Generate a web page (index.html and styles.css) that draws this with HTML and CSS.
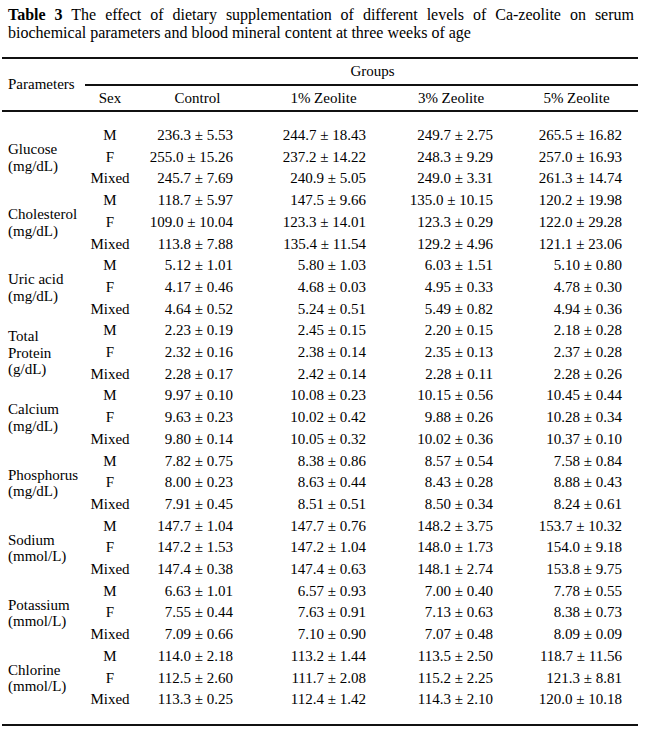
FILE: index.html
```html
<!DOCTYPE html>
<html>
<head>
<meta charset="utf-8">
<link rel="stylesheet" href="styles.css">
</head>
<body>
<div class="page">
  <p class="caption"><b class="tno">Table 3</b> The effect of dietary supplementation of different levels of Ca-zeolite on serum biochemical parameters and blood mineral content at three weeks of age</p>
  <table class="tbl">
    <colgroup>
      <col class="c-param"><col class="c-sex"><col class="c-ctrl"><col class="c-z1"><col class="c-z3"><col class="c-z5">
    </colgroup>
    <thead>
      <tr class="h1">
        <th rowspan="2" class="param-h">Parameters</th>
        <th colspan="5" class="groups">Groups</th>
      </tr>
      <tr class="h2">
        <th>Sex</th><th>Control</th><th>1% Zeolite</th><th>3% Zeolite</th><th>5% Zeolite</th>
      </tr>
    </thead>
    <tbody>
      <tr class="gap"><td colspan="6"></td></tr>
      <tr><td rowspan="3" class="label">Glucose<br>(mg/dL)</td><td class="sex">M</td><td class="n n1">236.3 ± 5.53</td><td class="n n2">244.7 ± 18.43</td><td class="n n3">249.7 ± 2.75</td><td class="n n4">265.5 ± 16.82</td></tr>
      <tr><td class="sex">F</td><td class="n n1">255.0 ± 15.26</td><td class="n n2">237.2 ± 14.22</td><td class="n n3">248.3 ± 9.29</td><td class="n n4">257.0 ± 16.93</td></tr>
      <tr><td class="sex">Mixed</td><td class="n n1">245.7 ± 7.69</td><td class="n n2">240.9 ± 5.05</td><td class="n n3">249.0 ± 3.31</td><td class="n n4">261.3 ± 14.74</td></tr>

      <tr><td rowspan="3" class="label">Cholesterol<br>(mg/dL)</td><td class="sex">M</td><td class="n n1">118.7 ± 5.97</td><td class="n n2">147.5 ± 9.66</td><td class="n n3">135.0 ± 10.15</td><td class="n n4">120.2 ± 19.98</td></tr>
      <tr><td class="sex">F</td><td class="n n1">109.0 ± 10.04</td><td class="n n2">123.3 ± 14.01</td><td class="n n3">123.3 ± 0.29</td><td class="n n4">122.0 ± 29.28</td></tr>
      <tr><td class="sex">Mixed</td><td class="n n1">113.8 ± 7.88</td><td class="n n2">135.4 ± 11.54</td><td class="n n3">129.2 ± 4.96</td><td class="n n4">121.1 ± 23.06</td></tr>

      <tr><td rowspan="3" class="label">Uric acid<br>(mg/dL)</td><td class="sex">M</td><td class="n n1">5.12 ± 1.01</td><td class="n n2">5.80 ± 1.03</td><td class="n n3">6.03 ± 1.51</td><td class="n n4">5.10 ± 0.80</td></tr>
      <tr><td class="sex">F</td><td class="n n1">4.17 ± 0.46</td><td class="n n2">4.68 ± 0.03</td><td class="n n3">4.95 ± 0.33</td><td class="n n4">4.78 ± 0.30</td></tr>
      <tr><td class="sex">Mixed</td><td class="n n1">4.64 ± 0.52</td><td class="n n2">5.24 ± 0.51</td><td class="n n3">5.49 ± 0.82</td><td class="n n4">4.94 ± 0.36</td></tr>

      <tr><td rowspan="3" class="label">Total<br>Protein<br>(g/dL)</td><td class="sex">M</td><td class="n n1">2.23 ± 0.19</td><td class="n n2">2.45 ± 0.15</td><td class="n n3">2.20 ± 0.15</td><td class="n n4">2.18 ± 0.28</td></tr>
      <tr><td class="sex">F</td><td class="n n1">2.32 ± 0.16</td><td class="n n2">2.38 ± 0.14</td><td class="n n3">2.35 ± 0.13</td><td class="n n4">2.37 ± 0.28</td></tr>
      <tr><td class="sex">Mixed</td><td class="n n1">2.28 ± 0.17</td><td class="n n2">2.42 ± 0.14</td><td class="n n3">2.28 ± 0.11</td><td class="n n4">2.28 ± 0.26</td></tr>

      <tr><td rowspan="3" class="label">Calcium<br>(mg/dL)</td><td class="sex">M</td><td class="n n1">9.97 ± 0.10</td><td class="n n2">10.08 ± 0.23</td><td class="n n3">10.15 ± 0.56</td><td class="n n4">10.45 ± 0.44</td></tr>
      <tr><td class="sex">F</td><td class="n n1">9.63 ± 0.23</td><td class="n n2">10.02 ± 0.42</td><td class="n n3">9.88 ± 0.26</td><td class="n n4">10.28 ± 0.34</td></tr>
      <tr><td class="sex">Mixed</td><td class="n n1">9.80 ± 0.14</td><td class="n n2">10.05 ± 0.32</td><td class="n n3">10.02 ± 0.36</td><td class="n n4">10.37 ± 0.10</td></tr>

      <tr><td rowspan="3" class="label">Phosphorus<br>(mg/dL)</td><td class="sex">M</td><td class="n n1">7.82 ± 0.75</td><td class="n n2">8.38 ± 0.86</td><td class="n n3">8.57 ± 0.54</td><td class="n n4">7.58 ± 0.84</td></tr>
      <tr><td class="sex">F</td><td class="n n1">8.00 ± 0.23</td><td class="n n2">8.63 ± 0.44</td><td class="n n3">8.43 ± 0.28</td><td class="n n4">8.88 ± 0.43</td></tr>
      <tr><td class="sex">Mixed</td><td class="n n1">7.91 ± 0.45</td><td class="n n2">8.51 ± 0.51</td><td class="n n3">8.50 ± 0.34</td><td class="n n4">8.24 ± 0.61</td></tr>

      <tr><td rowspan="3" class="label">Sodium<br>(mmol/L)</td><td class="sex">M</td><td class="n n1">147.7 ± 1.04</td><td class="n n2">147.7 ± 0.76</td><td class="n n3">148.2 ± 3.75</td><td class="n n4">153.7 ± 10.32</td></tr>
      <tr><td class="sex">F</td><td class="n n1">147.2 ± 1.53</td><td class="n n2">147.2 ± 1.04</td><td class="n n3">148.0 ± 1.73</td><td class="n n4">154.0 ± 9.18</td></tr>
      <tr><td class="sex">Mixed</td><td class="n n1">147.4 ± 0.38</td><td class="n n2">147.4 ± 0.63</td><td class="n n3">148.1 ± 2.74</td><td class="n n4">153.8 ± 9.75</td></tr>

      <tr><td rowspan="3" class="label">Potassium<br>(mmol/L)</td><td class="sex">M</td><td class="n n1">6.63 ± 1.01</td><td class="n n2">6.57 ± 0.93</td><td class="n n3">7.00 ± 0.40</td><td class="n n4">7.78 ± 0.55</td></tr>
      <tr><td class="sex">F</td><td class="n n1">7.55 ± 0.44</td><td class="n n2">7.63 ± 0.91</td><td class="n n3">7.13 ± 0.63</td><td class="n n4">8.38 ± 0.73</td></tr>
      <tr><td class="sex">Mixed</td><td class="n n1">7.09 ± 0.66</td><td class="n n2">7.10 ± 0.90</td><td class="n n3">7.07 ± 0.48</td><td class="n n4">8.09 ± 0.09</td></tr>

      <tr><td rowspan="3" class="label">Chlorine<br>(mmol/L)</td><td class="sex">M</td><td class="n n1">114.0 ± 2.18</td><td class="n n2">113.2 ± 1.44</td><td class="n n3">113.5 ± 2.50</td><td class="n n4">118.7 ± 11.56</td></tr>
      <tr><td class="sex">F</td><td class="n n1">112.5 ± 2.60</td><td class="n n2">111.7 ± 2.08</td><td class="n n3">115.2 ± 2.25</td><td class="n n4">121.3 ± 8.81</td></tr>
      <tr><td class="sex">Mixed</td><td class="n n1">113.3 ± 0.25</td><td class="n n2">112.4 ± 1.42</td><td class="n n3">114.3 ± 2.10</td><td class="n n4">120.0 ± 10.18</td></tr>
      <tr class="gap"><td colspan="6"></td></tr>
    </tbody>
  </table>
</div>
</body>
</html>
```

FILE: styles.css
```css
html, body {
  margin: 0;
  padding: 0;
  background: #ffffff;
}

body {
  font-family: "Liberation Serif", "Times New Roman", Tinos, "Nimbus Roman", "DejaVu Serif", serif;
  color: #000;
}

.page {
  width: 647px;
  padding: 6px 0 0 2px;
  box-sizing: border-box;
}

.caption {
  margin: 0 13px 15px 6px;
  font-size: 16px;
  line-height: 18px;
  text-align: justify;
}

.caption .tno {
  font-weight: bold;
}

.tbl {
  border-collapse: collapse;
  table-layout: fixed;
  width: 636px;
  font-size: 15px;
}

.c-param { width: 83px; }
.c-sex { width: 50px; }
.c-ctrl { width: 125px; }
.c-z1 { width: 127px; }
.c-z3 { width: 128px; }
.c-z5 { width: 123px; }

.tbl th {
  font-weight: normal;
  padding: 0;
  text-align: center;
  vertical-align: middle;
}

.tbl .h1 th {
  border-top: 2px solid #111;
  height: 25px;
}

.tbl .h1 .groups {
  border-bottom: 2px solid #111;
  padding-left: 22px;
}

.tbl .h2 th {
  height: 24px;
  border-bottom: 2px solid #111;
}

.tbl .param-h {
  text-align: left;
  padding-left: 6px;
  border-bottom: 2px solid #111;
}

.tbl td {
  padding: 0;
  line-height: 21.7px;
  white-space: nowrap;
}

.tbl .gap td {
  height: 13px;
  line-height: 13px;
}

.tbl tbody tr:last-child td {
  border-bottom: 2px solid #111;
}

.tbl .label {
  line-height: 16.5px;
  padding-left: 6px;
  vertical-align: middle;
  text-align: left;
}

.tbl .sex {
  text-align: center;
}

.tbl .n {
  text-align: right;
}

.tbl .n1 { padding-right: 27px; }
.tbl .n2 { padding-right: 21px; }
.tbl .n3 { padding-right: 22px; }
.tbl .n4 { padding-right: 16px; }
```
